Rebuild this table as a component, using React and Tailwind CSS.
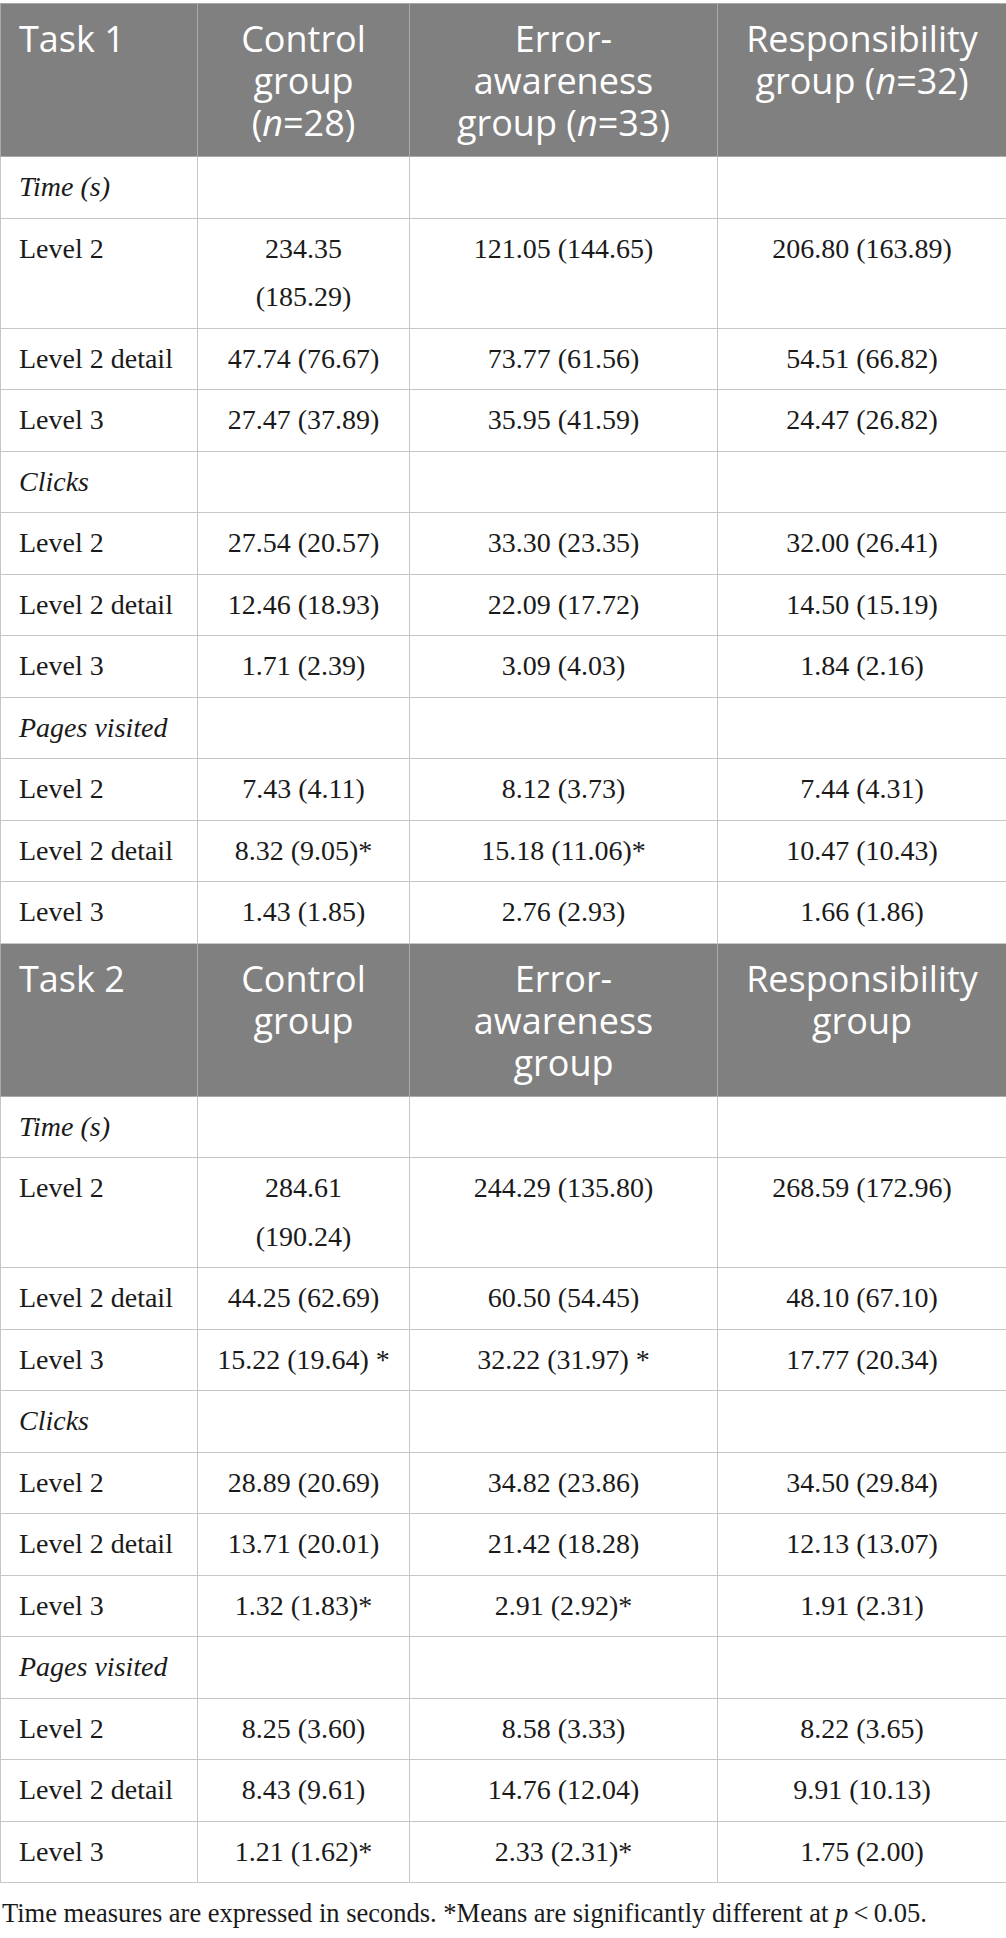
const task1 = [
    { section: "Time (s)" },
    { label: "Level 2", values: [["234.35", "(185.29)"], "121.05 (144.65)", "206.80 (163.89)"] },
    { label: "Level 2 detail", values: ["47.74 (76.67)", "73.77 (61.56)", "54.51 (66.82)"] },
    { label: "Level 3", values: ["27.47 (37.89)", "35.95 (41.59)", "24.47 (26.82)"] },
    { section: "Clicks" },
    { label: "Level 2", values: ["27.54 (20.57)", "33.30 (23.35)", "32.00 (26.41)"] },
    { label: "Level 2 detail", values: ["12.46 (18.93)", "22.09 (17.72)", "14.50 (15.19)"] },
    { label: "Level 3", values: ["1.71 (2.39)", "3.09 (4.03)", "1.84 (2.16)"] },
    { section: "Pages visited" },
    { label: "Level 2", values: ["7.43 (4.11)", "8.12 (3.73)", "7.44 (4.31)"] },
    { label: "Level 2 detail", values: ["8.32 (9.05)*", "15.18 (11.06)*", "10.47 (10.43)"] },
    { label: "Level 3", values: ["1.43 (1.85)", "2.76 (2.93)", "1.66 (1.86)"] },
];

const task2 = [
    { section: "Time (s)" },
    { label: "Level 2", values: [["284.61", "(190.24)"], "244.29 (135.80)", "268.59 (172.96)"] },
    { label: "Level 2 detail", values: ["44.25 (62.69)", "60.50 (54.45)", "48.10 (67.10)"] },
    { label: "Level 3", values: ["15.22 (19.64) *", "32.22 (31.97) *", "17.77 (20.34)"] },
    { section: "Clicks" },
    { label: "Level 2", values: ["28.89 (20.69)", "34.82 (23.86)", "34.50 (29.84)"] },
    { label: "Level 2 detail", values: ["13.71 (20.01)", "21.42 (18.28)", "12.13 (13.07)"] },
    { label: "Level 3", values: ["1.32 (1.83)*", "2.91 (2.92)*", "1.91 (2.31)"] },
    { section: "Pages visited" },
    { label: "Level 2", values: ["8.25 (3.60)", "8.58 (3.33)", "8.22 (3.65)"] },
    { label: "Level 2 detail", values: ["8.43 (9.61)", "14.76 (12.04)", "9.91 (10.13)"] },
    { label: "Level 3", values: ["1.21 (1.62)*", "2.33 (2.31)*", "1.75 (2.00)"] },
];

const headCell =
    "border border-[#a9aaa9] bg-[#7f807f] text-white align-top pt-[14px] pb-[12px] px-[18px] text-[36px] leading-[42px] font-normal";
const bodyCell =
    "border border-[#c6c6c6] align-top py-[6px] px-[18px] text-[28px] leading-[48.5px] text-[#1a1a1a] whitespace-nowrap";

function HeaderRow({ task, showN }) {
    return (
        <tr>
            <th className={`${headCell} text-left`}>{task}</th>
            <th className={`${headCell} text-center`}>
                Control
                <br />
                group
                {showN && (
                    <>
                        <br />(<i>n</i>=28)
                    </>
                )}
            </th>
            <th className={`${headCell} text-center`}>
                Error-
                <br />
                awareness
                <br />
                {showN ? (
                    <>
                        group (<i>n</i>=33)
                    </>
                ) : (
                    "group"
                )}
            </th>
            <th className={`${headCell} text-center`}>
                Responsibility
                <br />
                {showN ? (
                    <>
                        group (<i>n</i>=32)
                    </>
                ) : (
                    "group"
                )}
            </th>
        </tr>
    );
}

function BodyRows({ rows }) {
    return rows.map((row, i) => {
        if (row.section) {
            return (
                <tr key={i}>
                    <td className={`${bodyCell} italic`}>{row.section}</td>
                    <td className={bodyCell}></td>
                    <td className={bodyCell}></td>
                    <td className={bodyCell}></td>
                </tr>
            );
        }
        return (
            <tr key={i}>
                <td className={bodyCell}>{row.label}</td>
                {row.values.map((v, j) => (
                    <td key={j} className={`${bodyCell} text-center`}>
                        {Array.isArray(v) ? (
                            <>
                                {v[0]}
                                <br />
                                {v[1]}
                            </>
                        ) : (
                            v
                        )}
                    </td>
                ))}
            </tr>
        );
    });
}

export default function App() {
    return (
        <div className="w-[1006px] bg-white pt-[3px] pb-[10px] font-['Liberation_Serif',serif]">
            <table className="w-full table-fixed border-collapse">
                <colgroup>
                    <col className="w-[197px]" />
                    <col className="w-[212px]" />
                    <col className="w-[308px]" />
                    <col className="w-[289px]" />
                </colgroup>
                <thead className="font-['Open_Sans',sans-serif]">
                    <HeaderRow task="Task 1" showN />
                </thead>
                <tbody>
                    <BodyRows rows={task1} />
                </tbody>
                <tbody className="font-['Open_Sans',sans-serif]">
                    <HeaderRow task="Task 2" />
                </tbody>
                <tbody>
                    <BodyRows rows={task2} />
                </tbody>
            </table>
            <p className="mt-[12px] pl-[2px] text-[26.5px] leading-[36px] text-[#1a1a1a]">
                Time measures are expressed in seconds. *Means are significantly different at{" "}
                <i>p</i>
                {"\u2009<\u20090.05."}
            </p>
        </div>
    );
}
